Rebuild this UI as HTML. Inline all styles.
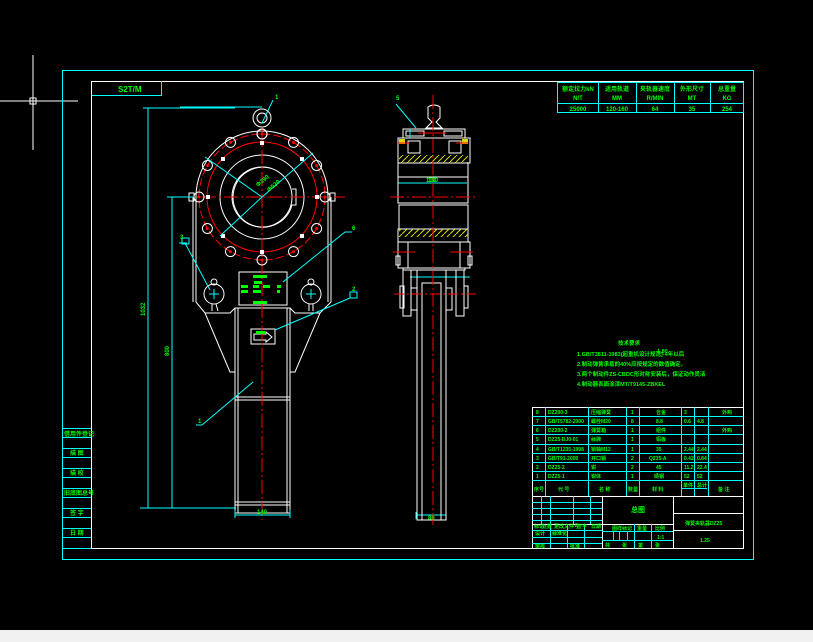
<!DOCTYPE html>
<html><head><meta charset="utf-8"><style>
html,body{margin:0;padding:0;background:#000;width:813px;height:642px;overflow:hidden}
svg{display:block}
text{font-family:"Liberation Sans","Noto Sans CJK SC",sans-serif;fill:#00ff00;font-weight:bold}
</style></head><body>
<svg width="813" height="642" viewBox="0 0 813 642" xmlns="http://www.w3.org/2000/svg">
<rect x="0" y="0" width="813" height="630" fill="#000"/>
<rect x="0" y="630" width="813" height="12" fill="#f0f0f0"/>
<!-- crosshair -->
<g stroke="#fff" stroke-width="1">
<line x1="0" y1="101" x2="78" y2="101"/><line x1="33" y1="55" x2="33" y2="150"/>
<rect x="30" y="98" width="6" height="6" fill="none"/>
</g>
<!-- frames -->
<rect x="62.5" y="70.5" width="691" height="489" fill="none" stroke="#0ff"/>
<rect x="91.5" y="81.5" width="652" height="467" fill="none" stroke="#fff"/>
<rect x="91.5" y="81.5" width="70" height="14" fill="none" stroke="#0ff"/>
<line x1="91" y1="81.5" x2="161" y2="81.5" stroke="#fff"/>
<line x1="91.5" y1="81" x2="91.5" y2="96" stroke="#fff"/>
<text x="118" y="92" font-size="8">S2T/M</text>
<!-- left column -->
<g stroke="#0ff">
<line x1="62" y1="428.5" x2="91" y2="428.5"/><line x1="62" y1="437.5" x2="91" y2="437.5"/>
<line x1="62" y1="448.5" x2="91" y2="448.5"/><line x1="62" y1="457.5" x2="91" y2="457.5"/>
<line x1="62" y1="468.5" x2="91" y2="468.5"/><line x1="62" y1="477.5" x2="91" y2="477.5"/>
<line x1="62" y1="488.5" x2="91" y2="488.5"/><line x1="62" y1="497.5" x2="91" y2="497.5"/>
<line x1="62" y1="508.5" x2="91" y2="508.5"/><line x1="62" y1="517.5" x2="91" y2="517.5"/>
<line x1="62" y1="528.5" x2="91" y2="528.5"/><line x1="62" y1="537.5" x2="91" y2="537.5"/>
<line x1="62" y1="548.5" x2="91" y2="548.5"/>
</g>
<g font-size="6">
<text x="64" y="436">借用件登记</text><text x="70" y="455">描 图</text><text x="70" y="475">描 校</text>
<text x="64" y="495">旧底图总号</text><text x="70" y="515">签 字</text><text x="70" y="535">日 期</text>
</g>
<!-- top right table -->
<g stroke="#0ff" fill="none">
<rect x="557.5" y="82.5" width="186" height="30"/>
<line x1="557" y1="103.5" x2="743" y2="103.5"/>
<line x1="598.5" y1="82" x2="598.5" y2="113"/><line x1="636.5" y1="82" x2="636.5" y2="113"/>
<line x1="674.5" y1="82" x2="674.5" y2="113"/><line x1="710.5" y1="82" x2="710.5" y2="113"/>
</g>
<g font-size="6" text-anchor="middle">
<text x="578" y="91">额定拉力kN</text><text x="617" y="91">适用轨道</text><text x="655" y="91">夹轨器速度</text><text x="692" y="91">外形尺寸</text><text x="727" y="91">总重量</text>
<text x="578" y="100">N/T</text><text x="617" y="100">MM</text><text x="655" y="100">R/MIN</text><text x="692" y="100">MT</text><text x="727" y="100">KG</text>
<text x="578" y="111">25000</text><text x="617" y="111">120-160</text><text x="655" y="111">64</text><text x="692" y="111">35</text><text x="727" y="111">254</text>
</g>
<!-- FRONT VIEW -->
<g fill="none" stroke="#fff" stroke-width="1">
<circle cx="262" cy="118" r="9"/><circle cx="262" cy="118" r="5"/>
<path d="M196 197 A66 66 0 0 1 328 197"/>
<line x1="196" y1="197" x2="196" y2="302"/><line x1="328" y1="197" x2="328" y2="302"/>
<line x1="331" y1="197" x2="331" y2="302"/><line x1="193" y1="197" x2="193" y2="302"/>
<path d="M196 302 L205 313 L230 313 L235 308 L290 308 L295 313 L320 313 L331 302"/>
<path d="M205 313 L230 372 L235 372 M320 313 L295 372 L290 372"/>
<rect x="235" y="308" width="55" height="205"/>
<line x1="238" y1="308" x2="238" y2="513"/><line x1="287" y1="308" x2="287" y2="513"/>
<line x1="235" y1="397" x2="290" y2="397"/><line x1="235" y1="400" x2="290" y2="400"/>
<line x1="235" y1="502" x2="290" y2="502"/><line x1="235" y1="505" x2="290" y2="505"/>
<circle cx="262" cy="197" r="42"/><circle cx="262" cy="197" r="30"/>
<path d="M270 168 A30 30 0 1 0 292 205 L296 205 L296 189 L292 189" />
<rect x="239" y="272" width="48" height="33"/>
<rect x="251" y="329" width="24" height="15"/>
<path d="M254 334 L266 334 L266 332 L272 337 L266 342 L266 340 L254 340 Z"/>
<circle cx="214" cy="294" r="10"/><circle cx="311" cy="294" r="10"/>
<circle cx="214" cy="282" r="3"/><circle cx="311" cy="282" r="3"/>
<path d="M212 304 L212 311 M216 304 L218 311 M309 304 L309 311 M313 304 L313 311"/>
<rect x="189" y="193" width="5" height="8"/><rect x="330" y="193" width="5" height="8"/>
</g>
<g fill="none" stroke="#f00" stroke-width="1">
<circle cx="262" cy="197" r="63" stroke-dasharray="8 3"/>
<circle cx="262" cy="197" r="55"/>
<g stroke="#fff"><g id="b">
<circle cx="262" cy="134" r="5"/></g></g>
<line x1="262" y1="128" x2="262" y2="520" stroke-dasharray="14 3 2 3"/>
<line x1="180" y1="197" x2="345" y2="197" stroke-dasharray="14 3 2 3"/>
</g>
<g fill="none" stroke="#fff">
<circle cx="262" cy="134" r="5"/><circle cx="262" cy="260" r="5"/>
<circle cx="199" cy="197" r="5"/><circle cx="325" cy="197" r="5"/>
<circle cx="293.5" cy="142.4" r="5"/><circle cx="316.6" cy="165.5" r="5"/>
<circle cx="316.6" cy="228.5" r="5"/><circle cx="293.5" cy="251.6" r="5"/>
<circle cx="230.5" cy="251.6" r="5"/><circle cx="207.4" cy="228.5" r="5"/>
<circle cx="207.4" cy="165.5" r="5"/><circle cx="230.5" cy="142.4" r="5"/>
</g>
<g fill="#f00">
<circle cx="262" cy="134" r="1.5"/><circle cx="262" cy="260" r="1.5"/><circle cx="199" cy="197" r="1.5"/><circle cx="325" cy="197" r="1.5"/>
<circle cx="293.5" cy="142.4" r="1.5"/><circle cx="316.6" cy="165.5" r="1.5"/><circle cx="316.6" cy="228.5" r="1.5"/><circle cx="293.5" cy="251.6" r="1.5"/>
<circle cx="230.5" cy="251.6" r="1.5"/><circle cx="207.4" cy="228.5" r="1.5"/><circle cx="207.4" cy="165.5" r="1.5"/><circle cx="230.5" cy="142.4" r="1.5"/>
</g>
<g fill="#fff"><rect x="260" y="141" width="4" height="4"/><rect x="221" y="157" width="4" height="4"/><rect x="300" y="157" width="4" height="4"/><rect x="221" y="234" width="4" height="4"/><rect x="300" y="234" width="4" height="4"/><rect x="260" y="250" width="4" height="4"/><rect x="206" y="195" width="4" height="4"/><rect x="315" y="195" width="4" height="4"/></g>
<!-- plate text -->
<g fill="#00ff00"><rect x="253" y="275" width="14" height="3"/><rect x="254" y="281" width="8" height="3"/><rect x="241" y="285" width="7" height="3"/><rect x="253" y="285" width="6" height="3"/><rect x="263" y="285" width="7" height="3"/><rect x="241" y="290" width="7" height="3"/><rect x="253" y="290" width="8" height="3"/><rect x="277" y="285" width="4" height="3"/><rect x="277" y="290" width="3" height="3"/><rect x="253" y="301" width="14" height="3"/><rect x="256" y="331" width="9" height="3"/></g>
<g fill="#0ff"><line x1="213" y1="294" x2="215" y2="294"/></g>
<g stroke="#0ff" stroke-width="1">
<line x1="209" y1="294" x2="219" y2="294"/><line x1="214" y1="289" x2="214" y2="299"/>
<line x1="306" y1="294" x2="316" y2="294"/><line x1="311" y1="289" x2="311" y2="299"/>
<!-- leaders -->
<line x1="262" y1="123" x2="273" y2="100"/><line x1="180" y1="107" x2="262" y2="107"/>
<line x1="205" y1="157" x2="262" y2="197"/><line x1="262" y1="197" x2="313" y2="153"/>
<line x1="262" y1="197" x2="220" y2="236"/>
<line x1="185" y1="243" x2="210" y2="290"/><line x1="179" y1="243" x2="187" y2="243"/>
<line x1="283" y1="282" x2="345" y2="232"/><line x1="345" y1="232" x2="352" y2="232"/>
<line x1="275" y1="330" x2="350" y2="298"/>
<line x1="253" y1="382" x2="202" y2="425"/><line x1="196" y1="425" x2="202" y2="425"/>
<line x1="396" y1="104" x2="416" y2="128"/>
<line x1="410" y1="277" x2="470" y2="277"/>
<rect x="182" y="238" width="7" height="6" fill="none"/><rect x="350" y="292" width="7" height="6" fill="none"/>
<!-- dimensions -->
<line x1="148" y1="108" x2="148" y2="508"/><line x1="143" y1="108" x2="235" y2="108"/>
<line x1="172" y1="197" x2="172" y2="508"/><line x1="167" y1="197" x2="193" y2="197"/>
<line x1="140" y1="508" x2="236" y2="508"/>
<line x1="235" y1="510" x2="235" y2="518"/><line x1="290" y1="510" x2="290" y2="518"/><line x1="235" y1="515" x2="290" y2="515"/>
<line x1="416" y1="515" x2="446" y2="515"/><line x1="416" y1="512" x2="416" y2="519"/><line x1="446" y1="512" x2="446" y2="519"/>
<line x1="398" y1="183" x2="467" y2="183"/>
</g>
<g font-size="6">
<text x="275" y="99">1</text><text x="180" y="239">3</text><text x="352" y="230">6</text><text x="352" y="291">2</text><text x="198" y="423">1</text><text x="396" y="100">5</text>
<text x="257" y="514">140</text><text x="428" y="520">80</text><text x="426" y="182">100</text>
<text x="258" y="187" transform="rotate(-40 258 187)">Φ390</text>
<text x="269" y="192" transform="rotate(-40 269 192)">Φ530</text>
<text x="145" y="316" transform="rotate(-90 145 316)">1032</text>
<text x="169" y="356" transform="rotate(-90 169 356)">800</text>
</g>
<!-- SIDE VIEW -->
<g fill="none" stroke="#fff">
<path d="M428 107 Q434 103 440 107 L440 118 L436 122 L442 128 L426 128 L432 122 L428 118 Z"/>
<rect x="403" y="129" width="62" height="9"/>
<rect x="398" y="138" width="72" height="25"/>
<rect x="398" y="163" width="70" height="14"/>
<rect x="398" y="177" width="70" height="26"/>
<rect x="399" y="205" width="69" height="24"/>
<rect x="398" y="229" width="70" height="13"/>
<rect x="398" y="242" width="10" height="26"/><rect x="460" y="242" width="10" height="26"/>
<rect x="403" y="268" width="62" height="2"/>
<rect x="403" y="270" width="8" height="46"/><rect x="456" y="270" width="8" height="46"/>
<rect x="417" y="270" width="29" height="250"/><rect x="422" y="283" width="19" height="237"/>
<rect x="411" y="288" width="6" height="22"/><rect x="446" y="288" width="6" height="22"/>
<rect x="400" y="286" width="4" height="22"/><rect x="464" y="286" width="4" height="22"/>
<rect x="396" y="256" width="4" height="9"/><rect x="468" y="256" width="4" height="9"/>
<rect x="408" y="141" width="12" height="12"/><rect x="449" y="141" width="12" height="12"/>
<rect x="406" y="131" width="18" height="5"/><rect x="444" y="131" width="18" height="5"/>
</g>
<g fill="#ffff00" opacity="0.85">
<rect x="399" y="155" width="69" height="8" fill="url(#h)"/>
<rect x="399" y="229" width="69" height="8" fill="url(#h)"/>
<rect x="399" y="139" width="6" height="5"/><rect x="462" y="139" width="6" height="5"/>
</g>
<defs><pattern id="h" width="6" height="6" patternUnits="userSpaceOnUse"><path d="M0 6 L6 0" stroke="#ff0" stroke-width="1"/></pattern></defs>
<g stroke="#f00">
<line x1="433" y1="95" x2="433" y2="525" stroke-dasharray="14 3 2 3"/>
<line x1="390" y1="197" x2="478" y2="197" stroke-dasharray="14 3 2 3"/>
<line x1="393" y1="252" x2="415" y2="252"/><line x1="450" y1="252" x2="473" y2="252"/>
<line x1="394" y1="294" x2="477" y2="294" stroke-dasharray="10 3 2 3"/>
<line x1="398" y1="143" x2="410" y2="143"/><line x1="456" y1="143" x2="468" y2="143"/>
</g>
<line x1="410" y1="129" x2="410" y2="138" stroke="#0ff"/><line x1="418" y1="133" x2="446" y2="133" stroke="#f00"/>
<text x="428" y="182" font-size="6">100</text>
<!-- notes -->
<g font-size="5.5">
<text x="618" y="345">技术要求</text>
<text x="577" y="356">1.GB/T3811-1983(起重机设计规范)-4年以后</text>
<text x="657" y="353">1.80</text>
<text x="577" y="366">2.制动弹簧承载的40%应按规定的数值确定。</text>
<text x="577" y="376">3.两个制动件ZS-CBDC形对称安装后，保证动作灵活</text>
<text x="577" y="386">4.制动器表面涂漆MT/T9145-ZBKEL</text>
</g>
<!-- parts table -->
<g stroke="#0ff" fill="none">
<rect x="532.5" y="407.5" width="211" height="141" stroke="#fff"/>
<line x1="532" y1="416.5" x2="743" y2="416.5"/><line x1="532" y1="425.5" x2="743" y2="425.5"/>
<line x1="532" y1="434.5" x2="743" y2="434.5"/><line x1="532" y1="444.5" x2="743" y2="444.5"/>
<line x1="532" y1="453.5" x2="743" y2="453.5"/><line x1="532" y1="462.5" x2="743" y2="462.5"/>
<line x1="532" y1="471.5" x2="743" y2="471.5"/><line x1="532" y1="480.5" x2="743" y2="480.5"/>
<line x1="681" y1="488.5" x2="707" y2="488.5"/>
<line x1="545.5" y1="407" x2="545.5" y2="496"/><line x1="588.5" y1="407" x2="588.5" y2="496"/>
<line x1="626.5" y1="407" x2="626.5" y2="496"/><line x1="639.5" y1="407" x2="639.5" y2="496"/>
<line x1="681.5" y1="407" x2="681.5" y2="496"/><line x1="694.5" y1="407" x2="694.5" y2="496"/>
<line x1="708.5" y1="407" x2="708.5" y2="496"/>
<line x1="532" y1="496.5" x2="743" y2="496.5" stroke="#fff"/>
<line x1="602.5" y1="496" x2="602.5" y2="548" stroke="#fff"/>
<line x1="673.5" y1="496" x2="673.5" y2="548" stroke="#fff"/>
<line x1="673" y1="513.5" x2="743" y2="513.5" stroke="#fff"/>
<line x1="673" y1="530.5" x2="743" y2="530.5" stroke="#fff"/>
<line x1="602" y1="524.5" x2="673" y2="524.5" stroke="#fff"/>
<line x1="602" y1="540.5" x2="673" y2="540.5"/>
<line x1="634.5" y1="524" x2="634.5" y2="548"/><line x1="651.5" y1="524" x2="651.5" y2="548"/>
<line x1="613.5" y1="531" x2="613.5" y2="540"/><line x1="619.5" y1="531" x2="619.5" y2="540"/><line x1="627.5" y1="531" x2="627.5" y2="540"/>
<line x1="602" y1="531.5" x2="673" y2="531.5"/>
<line x1="532" y1="502.5" x2="602" y2="502.5"/><line x1="532" y1="508.5" x2="602" y2="508.5"/>
<line x1="532" y1="514.5" x2="602" y2="514.5"/><line x1="532" y1="520.5" x2="602" y2="520.5"/>
<line x1="532" y1="524.5" x2="602" y2="524.5" stroke="#fff"/>
<line x1="532" y1="530.5" x2="602" y2="530.5"/><line x1="532" y1="537.5" x2="602" y2="537.5"/><line x1="532" y1="543.5" x2="602" y2="543.5"/>
<line x1="541.5" y1="496" x2="541.5" y2="524"/><line x1="550.5" y1="496" x2="550.5" y2="548"/>
<line x1="573.5" y1="496" x2="573.5" y2="524"/><line x1="590.5" y1="496" x2="590.5" y2="524"/>
<line x1="567.5" y1="524" x2="567.5" y2="548"/><line x1="584.5" y1="524" x2="584.5" y2="548"/>
</g>
<g font-size="5">
<text x="536" y="414">8</text><text x="548" y="414">DZ200-3</text><text x="591" y="414">压缩弹簧</text><text x="631" y="414">1</text><text x="656" y="414">合金</text><text x="684" y="414">3</text><text x="722" y="414">外购</text>
<text x="536" y="423">7</text><text x="548" y="423">GB/T5782-2000</text><text x="591" y="423">螺栓M20</text><text x="631" y="423">8</text><text x="656" y="423">8.8</text><text x="684" y="423">0.6</text><text x="697" y="423">4.8</text>
<text x="536" y="432">6</text><text x="548" y="432">DZ200-2</text><text x="591" y="432">弹簧箱</text><text x="631" y="432">1</text><text x="656" y="432">组件</text><text x="722" y="432">外购</text>
<text x="536" y="441">5</text><text x="548" y="441">DZ25-DJ0-01</text><text x="591" y="441">标牌</text><text x="631" y="441">1</text><text x="656" y="441">铝板</text>
<text x="536" y="451">4</text><text x="548" y="451">GB/T1235-1998</text><text x="591" y="451">销轴M12</text><text x="631" y="451">1</text><text x="656" y="451">35</text><text x="684" y="451">2.44</text><text x="697" y="451">2.44</text>
<text x="536" y="460">3</text><text x="548" y="460">GB/T91-2000</text><text x="591" y="460">开口销</text><text x="631" y="460">2</text><text x="649" y="460">Q235-A</text><text x="684" y="460">0.42</text><text x="697" y="460">0.84</text>
<text x="536" y="469">2</text><text x="548" y="469">DZ25-2</text><text x="591" y="469">钳</text><text x="631" y="469">2</text><text x="656" y="469">45</text><text x="684" y="469">11.2</text><text x="697" y="469">22.4</text>
<text x="536" y="478">1</text><text x="548" y="478">DZ25-1</text><text x="591" y="478">钳体</text><text x="631" y="478">1</text><text x="654" y="478">铸钢</text><text x="684" y="478">52</text><text x="697" y="478">52</text>
<text x="534" y="491">序号</text><text x="558" y="491">代 号</text><text x="599" y="491">名 称</text><text x="628" y="491">数量</text><text x="652" y="491">材 料</text><text x="683" y="487">单件</text><text x="697" y="487">总计</text><text x="718" y="491">备 注</text>
<text x="534" y="528">标记</text><text x="542" y="528">处数</text><text x="554" y="528">更改文件号</text><text x="577" y="528">签字</text><text x="591" y="528">日期</text>
<text x="535" y="535">设计</text><text x="552" y="535">标准化</text><text x="535" y="548">审核</text><text x="570" y="548">批准</text>
<text x="612" y="530">图样标记</text><text x="637" y="530">重量</text><text x="655" y="530">比例</text>
<text x="657" y="539">1:1</text><text x="605" y="547">共</text><text x="622" y="547">张</text><text x="638" y="547">第</text><text x="655" y="547">张</text>
<text x="685" y="525">弹簧夹轨器DZ25</text><text x="700" y="542">1.25</text>
</g>
<text x="631" y="512" font-size="7">总图</text>
</svg>
</body></html>
